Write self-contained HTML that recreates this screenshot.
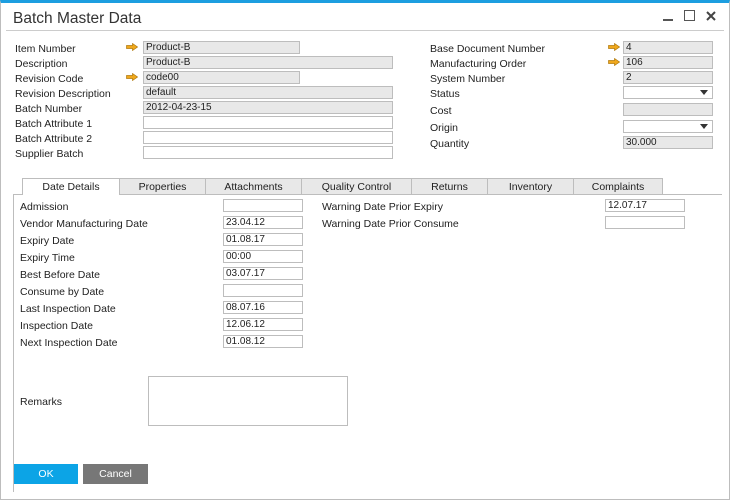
<!DOCTYPE html>
<html><head><style>
*{margin:0;padding:0;box-sizing:border-box}
body{width:730px;height:500px;background:#fff;font-family:"Liberation Sans",Tahoma,sans-serif;font-size:10.5px;color:#222;position:relative;overflow:hidden}
.a{position:absolute}
.l{position:absolute;line-height:13px;white-space:nowrap;margin-top:1px}
.f{position:absolute;height:13px;border:1px solid #bdbdbd;background:#fff;padding-left:2px;line-height:12px;font-size:10px}
.g{background:#e8e8e8}
.ar{position:absolute;width:12px;height:8px}
.tab{position:absolute;top:178px;height:16px;border:1px solid #bdbdbd;border-bottom:none;background:#e8e8e8;text-align:center;line-height:16px;font-size:10.5px}
.dd:after{content:"";position:absolute;right:4px;top:3px;border-left:4px solid transparent;border-right:4px solid transparent;border-top:5px solid #333}
</style></head><body>
<div class="a" style="left:0;top:0;width:730px;height:500px;border:1px solid #bdbdbd;border-top:3px solid #1c9ee0"></div>
<div class="l" style="left:13px;top:8px;font-size:15.5px;line-height:20px;color:#333">Batch Master Data</div>
<div class="a" style="left:6px;top:30px;width:718px;height:1px;background:#ccc"></div>
<div class="a" style="left:663px;top:19px;width:10px;height:2px;background:#555"></div>
<div class="a" style="left:684px;top:10px;width:11px;height:11px;border:1px solid #555"></div>
<svg class="a" style="left:706px;top:11px" width="10" height="10"><path d="M1 1L9 9M9 1L1 9" stroke="#444" stroke-width="2"/></svg>

<svg width="0" height="0" style="position:absolute"><defs><symbol id="arr" viewBox="0 0 12 8"><path d="M0.5 2.5H6.5V0.5L11.5 4L6.5 7.5V5.5H0.5Z" fill="#f0a81c" stroke="#b07a10" stroke-width="0.7"/></symbol></defs></svg>

<div class="l" style="left:15px;top:42px">Item Number</div>
<div class="l" style="left:15px;top:57px">Description</div>
<div class="l" style="left:15px;top:72px">Revision Code</div>
<div class="l" style="left:15px;top:87px">Revision Description</div>
<div class="l" style="left:15px;top:102px">Batch Number</div>
<div class="l" style="left:15px;top:117px">Batch Attribute 1</div>
<div class="l" style="left:15px;top:132px">Batch Attribute 2</div>
<div class="l" style="left:15px;top:147px">Supplier Batch</div>
<svg class="ar" style="left:126px;top:43px"><use href="#arr"/></svg>
<svg class="ar" style="left:126px;top:73px"><use href="#arr"/></svg>
<div class="f g" style="left:143px;top:41px;width:157px">Product-B</div>
<div class="f g" style="left:143px;top:56px;width:250px">Product-B</div>
<div class="f g" style="left:143px;top:71px;width:157px">code00</div>
<div class="f g" style="left:143px;top:86px;width:250px">default</div>
<div class="f g" style="left:143px;top:101px;width:250px">2012-04-23-15</div>
<div class="f" style="left:143px;top:116px;width:250px"></div>
<div class="f" style="left:143px;top:131px;width:250px"></div>
<div class="f" style="left:143px;top:146px;width:250px"></div>

<div class="l" style="left:430px;top:42px">Base Document Number</div>
<div class="l" style="left:430px;top:57px">Manufacturing Order</div>
<div class="l" style="left:430px;top:72px">System Number</div>
<div class="l" style="left:430px;top:87px">Status</div>
<div class="l" style="left:430px;top:104px">Cost</div>
<div class="l" style="left:430px;top:121px">Origin</div>
<div class="l" style="left:430px;top:137px">Quantity</div>
<svg class="ar" style="left:608px;top:43px"><use href="#arr"/></svg>
<svg class="ar" style="left:608px;top:58px"><use href="#arr"/></svg>
<div class="f g" style="left:623px;top:41px;width:90px">4</div>
<div class="f g" style="left:623px;top:56px;width:90px">106</div>
<div class="f g" style="left:623px;top:71px;width:90px">2</div>
<div class="f dd" style="left:623px;top:86px;width:90px"></div>
<div class="f g" style="left:623px;top:103px;width:90px"></div>
<div class="f dd" style="left:623px;top:120px;width:90px"></div>
<div class="f g" style="left:623px;top:136px;width:90px">30.000</div>

<div class="a" style="left:13px;top:194px;width:709px;height:1px;background:#bdbdbd"></div>
<div class="a" style="left:13px;top:194px;width:1px;height:298px;background:#bdbdbd"></div>
<div class="tab" style="left:22px;width:98px;background:#fff;height:17px">Date Details</div>
<div class="tab" style="left:119px;width:87px">Properties</div>
<div class="tab" style="left:205px;width:97px">Attachments</div>
<div class="tab" style="left:301px;width:111px">Quality Control</div>
<div class="tab" style="left:411px;width:77px">Returns</div>
<div class="tab" style="left:487px;width:87px">Inventory</div>
<div class="tab" style="left:573px;width:90px">Complaints</div>

<div class="l" style="left:20px;top:200px">Admission</div>
<div class="l" style="left:20px;top:217px">Vendor Manufacturing Date</div>
<div class="l" style="left:20px;top:234px">Expiry Date</div>
<div class="l" style="left:20px;top:251px">Expiry Time</div>
<div class="l" style="left:20px;top:268px">Best Before Date</div>
<div class="l" style="left:20px;top:285px">Consume by Date</div>
<div class="l" style="left:20px;top:302px">Last Inspection Date</div>
<div class="l" style="left:20px;top:319px">Inspection Date</div>
<div class="l" style="left:20px;top:336px">Next Inspection Date</div>
<div class="f" style="left:223px;top:199px;width:80px"></div>
<div class="f" style="left:223px;top:216px;width:80px">23.04.12</div>
<div class="f" style="left:223px;top:233px;width:80px">01.08.17</div>
<div class="f" style="left:223px;top:250px;width:80px">00:00</div>
<div class="f" style="left:223px;top:267px;width:80px">03.07.17</div>
<div class="f" style="left:223px;top:284px;width:80px"></div>
<div class="f" style="left:223px;top:301px;width:80px">08.07.16</div>
<div class="f" style="left:223px;top:318px;width:80px">12.06.12</div>
<div class="f" style="left:223px;top:335px;width:80px">01.08.12</div>

<div class="l" style="left:322px;top:200px">Warning Date Prior Expiry</div>
<div class="l" style="left:322px;top:217px">Warning Date Prior Consume</div>
<div class="f" style="left:605px;top:199px;width:80px">12.07.17</div>
<div class="f" style="left:605px;top:216px;width:80px"></div>

<div class="l" style="left:20px;top:395px">Remarks</div>
<div class="a" style="left:148px;top:376px;width:200px;height:50px;border:1px solid #bdbdbd"></div>

<div class="a" style="left:14px;top:464px;width:64px;height:20px;background:#0ca4e6;color:#fff;text-align:center;line-height:20px">OK</div>
<div class="a" style="left:83px;top:464px;width:65px;height:20px;background:#777;color:#fff;text-align:center;line-height:20px">Cancel</div>
</body></html>
